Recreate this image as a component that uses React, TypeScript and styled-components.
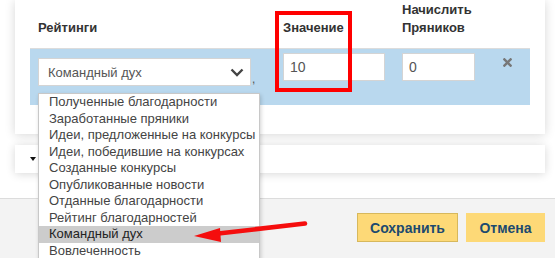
import styled, { createGlobalStyle } from "styled-components";
import { FaTimes } from "react-icons/fa";

const GlobalStyle = createGlobalStyle`
  html, body {
    margin: 0;
    padding: 0;
    height: 258px;
    overflow: hidden;
    background: #fff;
    font-family: "Liberation Sans", Arial, sans-serif;
  }
`;

const Page = styled.div`
  position: relative;
  width: 555px;
  height: 258px;
  display: flex;
  flex-direction: column;
  overflow: hidden;
`;

const Card = styled.div<{ $height: number; $gap?: number }>`
  margin: ${(p) => p.$gap ?? 0}px 10px 0 15px;
  height: ${(p) => p.$height}px;
  background: #fff;
  box-shadow: 0 1px 10px rgba(0, 0, 0, 0.16);
  box-sizing: border-box;
`;

const RatingsCard = styled(Card)`
  padding: 0 15px;
`;

const Cols = styled.div`
  display: grid;
  grid-template-columns: 245px 119px 100px 36px;
`;

const HeadRow = styled(Cols)`
  height: 49px;
  align-items: end;
  border-bottom: 1px solid #dcdcdc;
  box-sizing: border-box;
`;

const HeadCell = styled.div`
  padding: 0 8px 11px;
  font-size: 13px;
  font-weight: bold;
  line-height: 18px;
  color: #333;
`;

const BodyRow = styled(Cols)`
  height: 56px;
  background: #b9d8ee;
`;

const Cell = styled.div<{ $top: number }>`
  padding: ${(p) => p.$top}px 8px 0;
  position: relative;
`;

const SelectWrap = styled.div`
  position: relative;
  display: flex;
  align-items: flex-end;
  gap: 1px;
`;

const SelectBox = styled.div`
  width: 213px;
  height: 28px;
  box-sizing: border-box;
  background: #fff;
  border: 1px solid #d4d4d4;
  display: flex;
  align-items: center;
  justify-content: space-between;
  padding: 0 6px 0 9px;
  font-size: 13px;
  color: #555;
`;

const Comma = styled.span`
  font-size: 12px;
  color: #555;
  line-height: 14px;
`;

const Input = styled.div<{ $width: number }>`
  width: ${(p) => p.$width}px;
  height: 28px;
  box-sizing: border-box;
  background: #fff;
  border: 1px solid #d4d4d4;
  padding: 0 6px;
  display: flex;
  align-items: center;
  font-size: 14px;
  color: #555;
`;

const RemoveCell = styled.div`
  padding: 6px 0 0 7px;
  color: #777;
`;

const DropList = styled.div`
  position: absolute;
  top: 35px;
  left: 0;
  width: 220px;
  background: #fff;
  border: 1px solid #c8c8c8;
  box-shadow: 1px 2px 4px rgba(0, 0, 0, 0.18);
  z-index: 5;
`;

const Option = styled.div<{ $active?: boolean }>`
  height: 16.5px;
  line-height: 16.5px;
  padding-left: 10px;
  font-size: 13px;
  white-space: nowrap;
  color: ${(p) => (p.$active ? "#222" : "#444")};
  background: ${(p) => (p.$active ? "#cccccc" : "transparent")};
`;

const Caret = styled.div`
  padding: 12px 0 0 15px;
  width: 0;
  height: 0;
  &::before {
    content: "";
    display: block;
    border-left: 3.5px solid transparent;
    border-right: 3.5px solid transparent;
    border-top: 4px solid #111;
  }
`;

const Footer = styled.div`
  margin-top: 25px;
  flex: 1;
  background: #f3f3f3;
  border-top: 1px solid #dcdcdc;
  display: flex;
  justify-content: flex-end;
  align-items: flex-start;
  gap: 8px;
  padding: 14px 10px 0 0;
`;

const Button = styled.div<{ $width: number; $outlined?: boolean }>`
  width: ${(p) => p.$width}px;
  height: 29px;
  box-sizing: border-box;
  background: #fdd977;
  border: 1px solid ${(p) => (p.$outlined ? "#d7b85c" : "#fdd977")};
  display: flex;
  align-items: center;
  justify-content: center;
  font-size: 14px;
  font-weight: bold;
  color: #1c4a6f;
`;

const Highlight = styled.div`
  position: absolute;
  left: 275px;
  top: 11px;
  width: 77px;
  height: 81px;
  box-sizing: border-box;
  border: 4px solid #ff0000;
  pointer-events: none;
`;

const ArrowSvg = styled.svg`
  position: absolute;
  left: 0;
  top: 0;
  pointer-events: none;
  z-index: 10;
`;

const options = [
  "Полученные благодарности",
  "Заработанные пряники",
  "Идеи, предложенные на конкурсы",
  "Идеи, победившие на конкурсах",
  "Созданные конкурсы",
  "Опубликованные новости",
  "Отданные благодарности",
  "Рейтинг благодарностей",
  "Командный дух",
  "Вовлеченность",
];

export default function App() {
  return (
    <Page>
      <GlobalStyle />
      <RatingsCard $height={134}>
        <HeadRow>
          <HeadCell>Рейтинги</HeadCell>
          <HeadCell>Значение</HeadCell>
          <HeadCell>
            Начислить
            <br />
            Пряников
          </HeadCell>
          <div />
        </HeadRow>
        <BodyRow>
          <Cell $top={9}>
            <SelectWrap>
              <SelectBox>
                Командный дух
                <svg width="14" height="9" viewBox="0 0 14 9">
                  <polyline
                    points="1.5,1.5 7,7 12.5,1.5"
                    fill="none"
                    stroke="#444"
                    strokeWidth="2.4"
                  />
                </svg>
              </SelectBox>
              <Comma>,</Comma>
              <DropList>
                {options.map((o) => (
                  <Option key={o} $active={o === "Командный дух"}>
                    {o}
                  </Option>
                ))}
              </DropList>
            </SelectWrap>
          </Cell>
          <Cell $top={4}>
            <Input $width={102}>10</Input>
          </Cell>
          <Cell $top={4}>
            <Input $width={73}>0</Input>
          </Cell>
          <RemoveCell>
            <FaTimes size={13} />
          </RemoveCell>
        </BodyRow>
      </RatingsCard>
      <Card $height={28} $gap={11}>
        <Caret />
      </Card>
      <Footer>
        <Button $width={101} $outlined>
          Сохранить
        </Button>
        <Button $width={79}>Отмена</Button>
      </Footer>
      <Highlight />
      <ArrowSvg width="555" height="258">
        <line
          x1="305"
          y1="223.5"
          x2="214"
          y2="234"
          stroke="#f50d0d"
          strokeWidth="4.5"
          strokeLinecap="round"
        />
        <polygon points="194,236 220,228 221,242" fill="#f50d0d" />
      </ArrowSvg>
    </Page>
  );
}
